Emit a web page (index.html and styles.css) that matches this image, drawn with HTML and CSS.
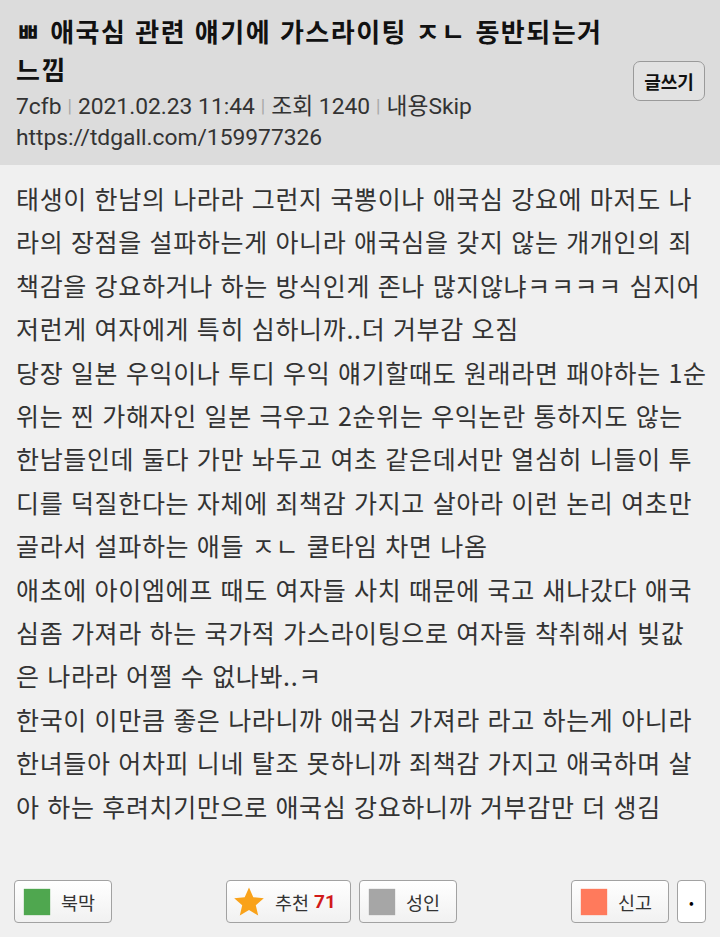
FILE: index.html
```html
<!DOCTYPE html>
<html lang="ko">
<head>
<meta charset="utf-8">
<title>게시글</title>
<link rel="stylesheet" href="styles.css">
</head>
<body>
<div class="page">
  <header class="post-head">
    <div class="head-info">
      <h1 class="title">ㅃ 애국심 관련 얘기에 가스라이팅 ㅈㄴ 동반되는거 느낌</h1>
      <div class="meta">7cfb<span class="sep">|</span>2021.02.23 11:44<span class="sep">|</span>조회 1240<span class="sep">|</span>내용Skip</div>
      <div class="url">https://tdgall.com/159977326</div>
    </div>
    <button class="write-btn">글쓰기</button>
  </header>

  <main class="post-body">
    <p>태생이 한남의 나라라 그런지 국뽕이나 애국심 강요에 마저도 나<br>라의 장점을 설파하는게 아니라 애국심을 갖지 않는 개개인의 죄<br>책감을 강요하거나 하는 방식인게 존나 많지않냐ㅋㅋㅋㅋ 심지어<br>저런게 여자에게 특히 심하니까..더 거부감 오짐</p>
    <p>당장 일본 우익이나 투디 우익 얘기할때도 원래라면 패야하는 1순<br>위는 찐 가해자인 일본 극우고 2순위는 우익논란 통하지도 않는<br>한남들인데 둘다 가만 놔두고 여초 같은데서만 열심히 니들이 투<br>디를 덕질한다는 자체에 죄책감 가지고 살아라 이런 논리 여초만<br>골라서 설파하는 애들 ㅈㄴ 쿨타임 차면 나옴</p>
    <p>애초에 아이엠에프 때도 여자들 사치 때문에 국고 새나갔다 애국<br>심좀 가져라 하는 국가적 가스라이팅으로 여자들 착취해서 빚값<br>은 나라라 어쩔 수 없나봐..ㅋ</p>
    <p>한국이 이만큼 좋은 나라니까 애국심 가져라 라고 하는게 아니라<br>한녀들아 어차피 니네 탈조 못하니까 죄책감 가지고 애국하며 살<br>아 하는 후려치기만으로 애국심 강요하니까 거부감만 더 생김</p>
  </main>

  <nav class="actions">
    <div class="group">
      <button class="act"><span class="sq sq-green"></span>북막</button>
    </div>
    <div class="group">
      <button class="act act-rec">
        <svg class="star" viewBox="0 0 32 32" width="32" height="32" aria-hidden="true"><path d="M16 1.5 L20.3 11.3 L30.8 12.2 L22.8 19.2 L25.2 29.6 L16 24.1 L6.8 29.6 L9.2 19.2 L1.2 12.2 L11.7 11.3 Z" fill="#f9a21a"/></svg>
        <span>추천</span><b class="count">71</b>
      </button>
      <button class="act"><span class="sq sq-gray"></span>성인</button>
    </div>
    <div class="group">
      <button class="act"><span class="sq sq-red"></span>신고</button>
      <button class="act act-dot">•</button>
    </div>
  </nav>
</div>
</body>
</html>
```

FILE: styles.css
```css
* { box-sizing: border-box; }

html, body {
  margin: 0;
  padding: 0;
  background: #f0f0f0;
}

body {
  font-family: "Noto Sans CJK KR", "Noto Sans", sans-serif;
  color: #222;
}

.page {
  width: 720px;
  min-height: 937px;
  display: flex;
  flex-direction: column;
}

.post-head {
  background: #dcdcdc;
  display: flex;
  align-items: center;
  gap: 14px;
  padding: 12px 15px 13px 16px;
  height: 165px;
}

.head-info {
  flex: 1;
  min-width: 0;
}

.title {
  margin: 0;
  font-family: "Noto Sans CJK KR", sans-serif;
  font-weight: 700;
  font-size: 26px;
  letter-spacing: 1.5px;
  line-height: 38px;
  color: #111;
}

.meta, .url {
  font-family: Roboto, "Noto Sans CJK KR", sans-serif;
  font-size: 22.8px;
  line-height: 30px;
  color: #333;
}

.meta {
  margin-top: 4px;
}

.sep {
  color: #a8a8a8;
  font-size: 18px;
  margin: 0 6px;
  position: relative;
  top: -2px;
}

.write-btn {
  flex: none;
  width: 72px;
  height: 40px;
  padding: 0;
  border: 1.5px solid #9a9a9a;
  border-radius: 7px;
  background: #e2e2e2;
  font-family: "Noto Sans CJK KR", sans-serif;
  font-weight: 700;
  font-size: 18px;
  color: #111;
  margin-top: -2px;
}

.post-body {
  padding: 12px 10px 0 16px;
  font-family: "Noto Sans CJK KR", sans-serif;
  font-size: 25px;
  letter-spacing: 0.65px;
  line-height: 43.4px;
  color: #333;
  white-space: nowrap;
}

.post-body p {
  margin: 0;
}

.actions {
  margin-top: auto;
  display: flex;
  justify-content: space-between;
  padding: 0 14px 14px 14px;
}

.group {
  display: flex;
  gap: 8px;
}

.act {
  height: 43px;
  width: 98px;
  display: flex;
  align-items: center;
  padding: 0 0 0 9px;
  border: 1.5px solid #a2a2a2;
  border-radius: 4px;
  background: linear-gradient(#ffffff, #f1f1f1);
  font-family: "Noto Sans CJK KR", sans-serif;
  font-size: 18.5px;
  color: #333;
}

.sq {
  width: 26px;
  height: 26px;
  margin-right: 11px;
  flex: none;
}
.sq-green { background: #4fa74f; box-shadow: 0 0 1px #4fa74f; }
.sq-gray  { background: #a6a6a6; box-shadow: 0 0 1px #a6a6a6; }
.sq-red   { background: #ff7a5c; box-shadow: 0 0 1px #ff7a5c; }

.act-rec {
  width: 125px;
  padding-left: 6px;
}

.star {
  margin-right: 10px;
  flex: none;
}

.count {
  color: #d11a1a;
  font-weight: 700;
  margin-left: 5px;
  font-family: Roboto, sans-serif;
  font-size: 19px;
}

.act-dot {
  width: 29px;
  padding: 0;
  justify-content: center;
  background: #ffffff;
  font-size: 14px;
  color: #000;
}
```
